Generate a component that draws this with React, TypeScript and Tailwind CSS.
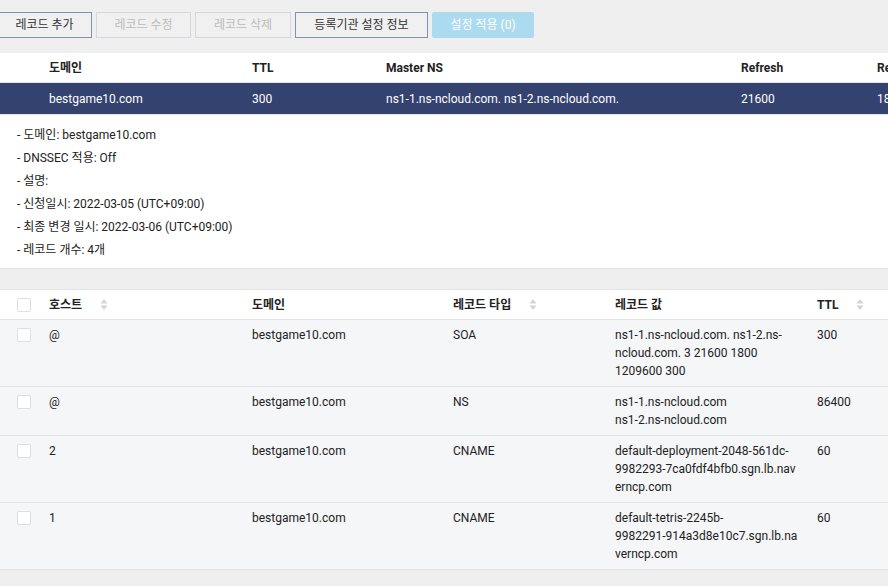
import React from "react";

const font = "font-['Roboto','Noto_Sans_CJK_KR',sans-serif]";

type RecordRow = { host: string; domain: string; type: string; value: string[]; ttl: string };

const records: RecordRow[] = [
  { host: "@", domain: "bestgame10.com", type: "SOA", value: ["ns1-1.ns-ncloud.com. ns1-2.ns-", "ncloud.com. 3 21600 1800", "1209600 300"], ttl: "300" },
  { host: "@", domain: "bestgame10.com", type: "NS", value: ["ns1-1.ns-ncloud.com", "ns1-2.ns-ncloud.com"], ttl: "86400" },
  { host: "2", domain: "bestgame10.com", type: "CNAME", value: ["default-deployment-2048-561dc-", "9982293-7ca0fdf4bfb0.sgn.lb.nav", "erncp.com"], ttl: "60" },
  { host: "1", domain: "bestgame10.com", type: "CNAME", value: ["default-tetris-2245b-", "9982291-914a3d8e10c7.sgn.lb.na", "verncp.com"], ttl: "60" },
];

const details = [
  "- 도메인: bestgame10.com",
  "- DNSSEC 적용: Off",
  "- 설명:",
  "- 신청일시: 2022-03-05 (UTC+09:00)",
  "- 최종 변경 일시: 2022-03-06 (UTC+09:00)",
  "- 레코드 개수: 4개",
];

function SortIcon() {
  return (
    <svg width="8" height="13" viewBox="0 0 8 13" className="ml-[18px] shrink-0">
      <path d="M4 1 L7.5 5.5 H0.5 Z" fill="#d2d4d8" />
      <path d="M4 12 L7.5 7.5 H0.5 Z" fill="#d2d4d8" />
    </svg>
  );
}

function Checkbox() {
  return <div className="h-[14px] w-[14px] rounded-[2px] border border-[#dcdfe3] bg-white" />;
}

export default function App() {
  return (
    <div className={`h-[586px] w-[888px] overflow-hidden bg-[#efefef] text-[12px] text-[#222] ${font}`}>
      {/* Toolbar */}
      <div className="ml-[-3px] flex h-[53px] gap-[4px] pt-[12px]">
        <button className="h-[26px] w-[95px] border border-[#8193aa] bg-[#f0f0f0] text-[#333]">레코드 추가</button>
        <button className="h-[26px] w-[95px] border border-[#d3d8de] bg-[#f0f0f0] text-[#bcbcbc]">레코드 수정</button>
        <button className="h-[26px] w-[96px] border border-[#d3d8de] bg-[#f0f0f0] text-[#bcbcbc]">레코드 삭제</button>
        <button className="h-[26px] w-[133px] border border-[#8193aa] bg-[#f0f0f0] text-[#333]">등록기관 설정 정보</button>
        <button className="h-[26px] w-[102px] rounded-[2px] bg-[#acdaef] text-white">설정 적용 (0)</button>
      </div>

      {/* Domain table */}
      <div className="w-[1000px]">
        <div className="grid h-[30px] grid-cols-[49px_203px_134px_355px_136px_1fr] items-center border-b border-[#e4e4e4] bg-white font-bold">
          <div />
          <div>도메인</div>
          <div>TTL</div>
          <div>Master NS</div>
          <div>Refresh</div>
          <div>Retry</div>
        </div>
        <div className="grid h-[32px] grid-cols-[49px_203px_134px_355px_136px_1fr] items-center border-b border-[#e4e4e4] bg-[#344270] text-white">
          <div />
          <div>bestgame10.com</div>
          <div>300</div>
          <div>ns1-1.ns-ncloud.com. ns1-2.ns-ncloud.com.</div>
          <div>21600</div>
          <div>1800</div>
        </div>
      </div>

      {/* Details */}
      <div className="border-b border-[#e4e4e4] bg-white pb-[6px] pl-[17px] pt-[9px] leading-[23px]">
        {details.map((d) => (
          <div key={d}>{d}</div>
        ))}
      </div>

      <div className="h-[20px]" />

      {/* Records table */}
      <div className="grid h-[31px] grid-cols-[49px_203px_201px_162px_202px_1fr] items-center border-y border-[#e2e4e8] bg-white font-bold">
        <div className="pl-[17px]">
          <Checkbox />
        </div>
        <div className="flex items-center">
          호스트
          <SortIcon />
        </div>
        <div>도메인</div>
        <div className="flex items-center">
          레코드 타입
          <SortIcon />
        </div>
        <div>레코드 값</div>
        <div className="flex items-center">
          TTL
          <SortIcon />
        </div>
      </div>
      {records.map((r, i) => (
        <div
          key={i}
          className="grid grid-cols-[49px_203px_201px_162px_202px_1fr] border-b border-[#e2e4e8] bg-[#f5f6f8] py-[6px] leading-[18px]"
        >
          <div className="pl-[17px] pt-[2px]">
            <Checkbox />
          </div>
          <div>{r.host}</div>
          <div>{r.domain}</div>
          <div>{r.type}</div>
          <div className="whitespace-nowrap">
            {r.value.map((line) => (
              <div key={line}>{line}</div>
            ))}
          </div>
          <div>{r.ttl}</div>
        </div>
      ))}
    </div>
  );
}
